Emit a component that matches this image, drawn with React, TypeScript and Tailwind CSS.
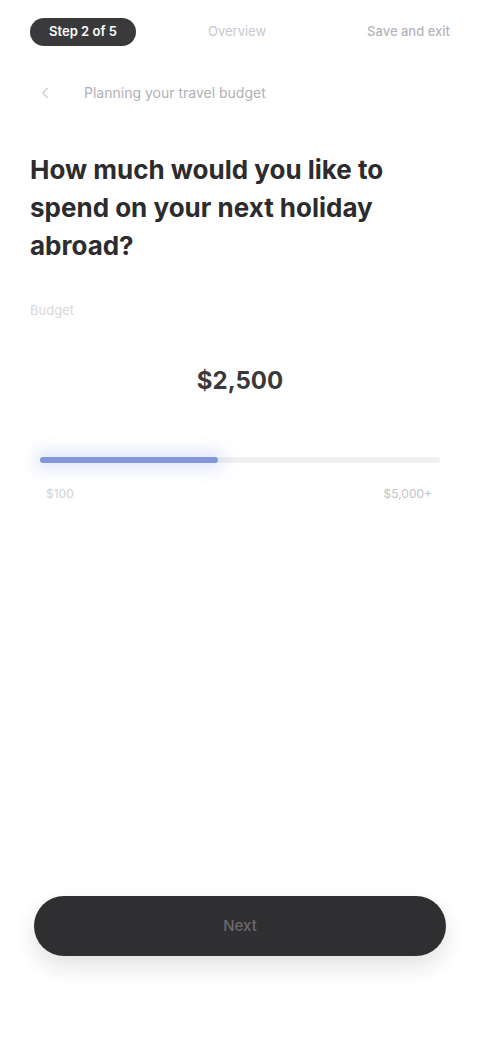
import React, { useState } from 'react';
import { ChevronLeft } from 'lucide-react';

export default function App() {
  const [amount] = useState(2500);
  const max = 5000;
  const pct = (amount / max) * 100;

  return (
    <div className="w-full h-[1040px] bg-white flex flex-col font-['Inter',sans-serif] text-[#1c1c1e]">
      {/* Top bar */}
      <div className="flex items-center px-[30px] pt-[16px] h-[48px]">
        <div className="h-[28px] w-[106px] rounded-full bg-[#3a3a3c] flex items-center justify-center text-[13px] font-semibold text-white">
          Step 2 of 5
        </div>
        <span className="ml-[72px] text-[13px] text-[#c7c7cc]">Overview</span>
        <span className="ml-auto text-[13px] text-[#b5b5ba] font-medium">Save and exit</span>
      </div>

      {/* Breadcrumb */}
      <div className="flex items-center gap-[30px] px-[36px] mt-[34px]">
        <ChevronLeft className="w-[18px] h-[18px] text-[#d1d1d6]" strokeWidth={2} />
        <span className="text-[14px] text-[#b0b0b5]">Planning your travel budget</span>
      </div>

      {/* Question */}
      <h1 className="px-[30px] mt-[48px] text-[26px] leading-[38px] font-bold text-[#2c2c2e]">
        How much would you like to spend on your next holiday abroad?
      </h1>

      <p className="px-[30px] mt-[36px] text-[13px] text-[#d8d8dc]">Budget</p>

      {/* Value */}
      <div className="mt-[42px] text-center text-[24px] font-bold text-[#3a3a3c]">${amount.toLocaleString('en-US')}</div>

      {/* Slider */}
      <div className="px-[40px] mt-[58px]">
        <div className="relative h-[6px] rounded-full bg-[#f0f0f3]">
          <div
            className="absolute left-0 top-0 h-full rounded-full bg-[#8296d8] shadow-[0_0_16px_6px_rgba(130,150,230,0.25)]"
            style={{ width: `${pct * 0.89}%` }}
          />
        </div>
        <div className="flex justify-between mt-[22px] text-[12px] text-[#d1d1d6]">
          <span className="pl-[6px]">$100</span>
          <span className="text-[#c4c4c8] pr-[8px]">$5,000+</span>
        </div>
      </div>

      <div className="flex-1" />

      {/* Button */}
      <div className="px-[34px] pb-[84px]">
        <button className="w-full h-[60px] rounded-full bg-[#2f2f31] text-[15px] font-medium text-[#6a6a6e] shadow-[0_10px_24px_rgba(0,0,0,0.12)]">
          Next
        </button>
      </div>
    </div>
  );
}
